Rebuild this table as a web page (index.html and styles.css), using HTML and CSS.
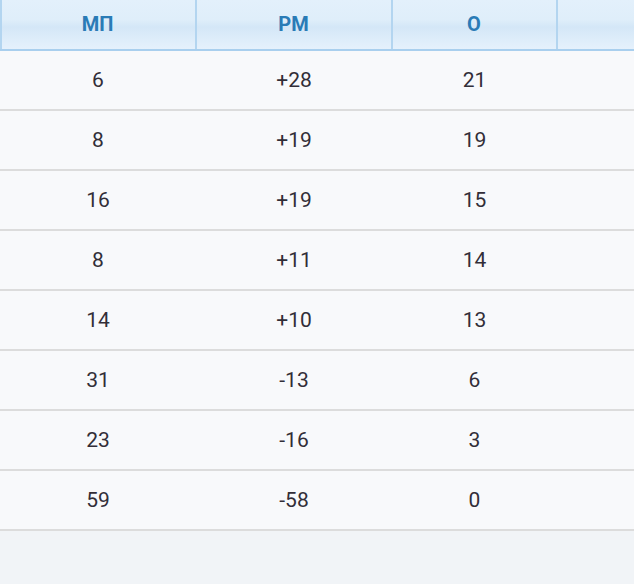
FILE: index.html
```html
<!DOCTYPE html>
<html lang="ru">
<head>
<meta charset="utf-8">
<link rel="stylesheet" href="styles.css">
</head>
<body>
<div class="page">
  <div class="standings">
    <div class="row head">
      <div class="cell">МП</div>
      <div class="cell">РМ</div>
      <div class="cell">О</div>
      <div class="cell"></div>
    </div>
    <div class="row"><div class="cell">6</div><div class="cell">+28</div><div class="cell">21</div><div class="cell"></div></div>
    <div class="row"><div class="cell">8</div><div class="cell">+19</div><div class="cell">19</div><div class="cell"></div></div>
    <div class="row"><div class="cell">16</div><div class="cell">+19</div><div class="cell">15</div><div class="cell"></div></div>
    <div class="row"><div class="cell">8</div><div class="cell">+11</div><div class="cell">14</div><div class="cell"></div></div>
    <div class="row"><div class="cell">14</div><div class="cell">+10</div><div class="cell">13</div><div class="cell"></div></div>
    <div class="row"><div class="cell">31</div><div class="cell">-13</div><div class="cell">6</div><div class="cell"></div></div>
    <div class="row"><div class="cell">23</div><div class="cell">-16</div><div class="cell">3</div><div class="cell"></div></div>
    <div class="row"><div class="cell">59</div><div class="cell">-58</div><div class="cell">0</div><div class="cell"></div></div>
  </div>
</div>
</body>
</html>
```
FILE: styles.css
```css
html, body {
  margin: 0;
  padding: 0;
  background: #f1f4f7;
  font-family: Roboto, "Noto Sans", sans-serif;
}
.page {
  width: 634px;
  height: 584px;
  overflow: hidden;
}
.standings {
  width: 700px;
}
.row {
  display: grid;
  grid-template-columns: 196px 196px 165px 143px;
  height: 60px;
  box-sizing: border-box;
  background: #f8f9fb;
  border-bottom: 2px solid #dcdcdc;
}
.cell {
  display: flex;
  align-items: center;
  justify-content: center;
  font-size: 21px;
  color: #322e38;
}
.row.head {
  height: 51px;
  border-bottom: 2px solid #a9cfee;
  background: linear-gradient(#e3f0fb 0%, #dfeefa 40%, #d4e7f7 55%, #e5f1fc 100%);
}
.head .cell {
  font-size: 20px;
  font-weight: 700;
  color: #2a7bb6;
  padding-bottom: 2px;
  border-right: 2px solid #b3d5f0;
  margin-right: -1px;
}
.head .cell:first-child {
  box-shadow: inset 2px 0 0 #b3d5f0;
}
```
